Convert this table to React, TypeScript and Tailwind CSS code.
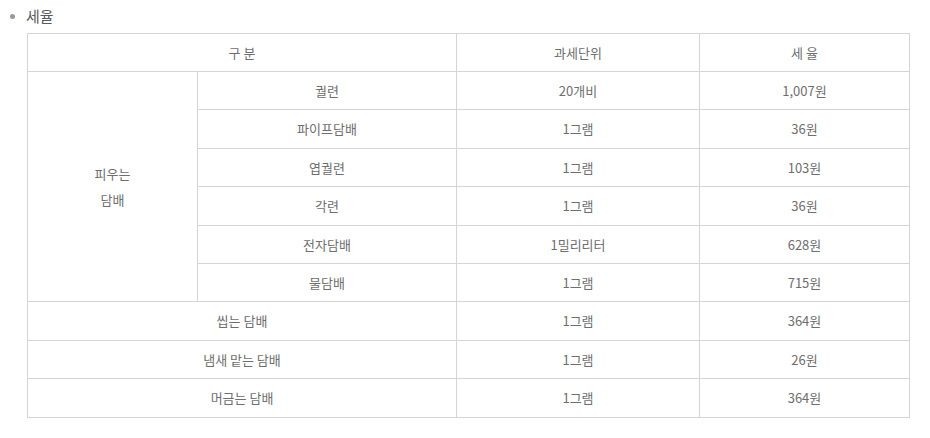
const rows = [
  { name: '궐련', unit: '20개비', rate: '1,007원' },
  { name: '파이프담배', unit: '1그램', rate: '36원' },
  { name: '엽궐련', unit: '1그램', rate: '103원' },
  { name: '각련', unit: '1그램', rate: '36원' },
  { name: '전자담배', unit: '1밀리리터', rate: '628원' },
  { name: '물담배', unit: '1그램', rate: '715원' },
];

const others = [
  { name: '씹는 담배', unit: '1그램', rate: '364원' },
  { name: '냄새 맡는 담배', unit: '1그램', rate: '26원' },
  { name: '머금는 담배', unit: '1그램', rate: '364원' },
];

const td = 'border border-[#d5d5d5] text-center align-middle';

export default function App() {
  return (
    <div
      className="bg-white w-[930px] h-[438px] text-[#6e6e6e] text-[13px]"
      style={{ fontFamily: '"Noto Sans CJK KR", "Noto Sans", sans-serif' }}
    >
      <div className="flex items-center h-[33px] pl-[10px] pb-[1px]">
        <span className="w-[5px] h-[5px] rounded-full bg-[#999] mr-[11px]" />
        <span className="text-[15px] text-[#5a5a5a]">세율</span>
      </div>
      <table className="ml-[27px] w-[882px] border-collapse table-fixed">
        <colgroup>
          <col className="w-[170px]" />
          <col className="w-[259px]" />
          <col className="w-[243px]" />
          <col className="w-[210px]" />
        </colgroup>
        <thead>
          <tr className="h-[38px]">
            <th colSpan={2} className={`${td} font-normal`}>구 분</th>
            <th className={`${td} font-normal`}>과세단위</th>
            <th className={`${td} font-normal`}>세 율</th>
          </tr>
        </thead>
        <tbody>
          {rows.map((r, i) => (
            <tr key={r.name} className="h-[38.4px]">
              {i === 0 && (
                <td rowSpan={6} className={`${td} leading-[26px]`}>
                  피우는
                  <br />
                  담배
                </td>
              )}
              <td className={td}>{r.name}</td>
              <td className={td}>{r.unit}</td>
              <td className={td}>{r.rate}</td>
            </tr>
          ))}
          {others.map((r) => (
            <tr key={r.name} className="h-[38.4px]">
              <td colSpan={2} className={td}>{r.name}</td>
              <td className={td}>{r.unit}</td>
              <td className={td}>{r.rate}</td>
            </tr>
          ))}
        </tbody>
      </table>
    </div>
  );
}
